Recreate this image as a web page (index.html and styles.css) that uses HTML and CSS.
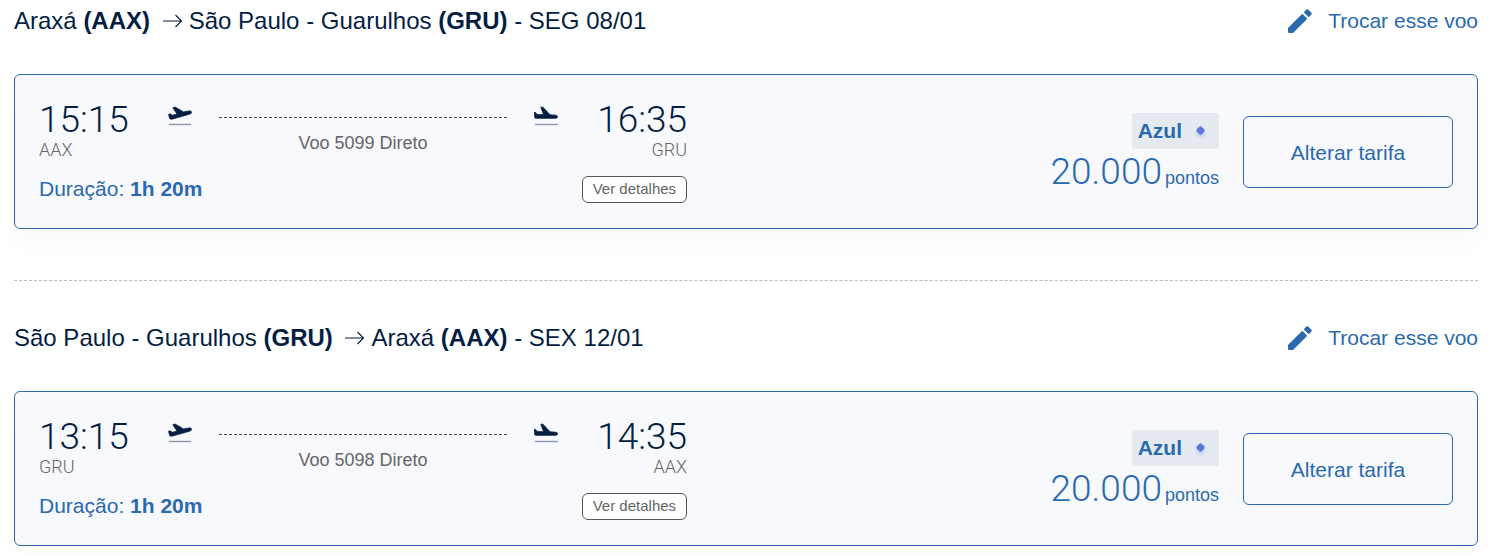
FILE: index.html
```html
<!DOCTYPE html>
<html lang="pt-BR">
<head>
  <meta charset="UTF-8">
  <meta name="viewport" content="width=device-width, initial-scale=1">
  <title>Seus voos</title>
  <link rel="stylesheet" href="styles.css">
</head>

<body>
  <!-- shared icons -->
  <svg class="sprite" aria-hidden="true">
    <symbol id="arrow" viewBox="0 0 20 16">
      <path d="M0 8H18.500M12.500 2L18.500 8L12.500 14" fill="none" stroke="currentColor" stroke-width="1.100"/>
    </symbol>
    <symbol id="pencil" viewBox="0 0 24 24">
      <path d="M0 19L14.300 4.700L19.300 9.700L5 24H1Q0 24 0 23Z" fill="currentColor"/>
      <path d="M15.700 3.300L18.400 .6Q19.300 -.2 20.200 .6L23.400 3.800Q24.200 4.700 23.400 5.600L20.700 8.300Z" fill="currentColor"/>
    </symbol>
    <symbol id="takeoff" viewBox="0 0 24 20">
      <path d="M.6 8.300L2 7.800L4.500 9.300L9 8L4.800 1.800L7 1L15.600 5.900L21.200 4.900Q23.200 4.700 23.500 6Q23.700 7.400 22 8.100L4.600 13Q2 13.600 1.500 12.300Z" fill="currentColor" stroke="currentColor" stroke-width=".8" stroke-linejoin="round"/>
      <path d="M1 18.500H23" stroke="#8b95a5" stroke-width="1.400"/>
    </symbol>
    <symbol id="landing" viewBox="0 0 24 20">
      <path d="M.5 6.300L1.700 6.500L3 8.600L9.600 8.700L6.800 1.200L9 1.200L16 8.800L21.500 9.200Q23.600 9.500 23.600 10.900Q23.400 12.300 21.500 12.300H2Q.5 12.300 .5 10.700Z" fill="currentColor" stroke="currentColor" stroke-width=".8" stroke-linejoin="round"/>
      <path d="M1 18.500H24" stroke="#8b95b5" stroke-width="1.400"/>
    </symbol>
  </svg>

  <main>
    <section class="flight">
      <header class="flight-header">
        <h2>Araxá <strong>(AAX)</strong> <svg class="arrow"><use href="#arrow"/></svg>São Paulo - Guarulhos <strong>(GRU)</strong> - SEG 08/01</h2>
        <a class="change" href="#"><svg class="pencil"><use href="#pencil"/></svg>Trocar esse voo</a>
      </header>
      <div class="card">
        <div class="journey">
          <div class="route">
            <div class="stop">
              <div class="time">15:15</div>
              <div class="code">AAX</div>
            </div>
            <svg class="plane"><use href="#takeoff"/></svg>
            <div class="path">Voo 5099 Direto</div>
            <svg class="plane"><use href="#landing"/></svg>
            <div class="stop arrival">
              <div class="time">16:35</div>
              <div class="code">GRU</div>
            </div>
          </div>
          <div class="info">
            <div class="duration">Duração: <strong>1h 20m</strong></div>
            <button class="details" type="button">Ver detalhes</button>
          </div>
        </div>
        <div class="fare">
          <div class="price">
            <div class="badge">Azul <span class="diamond"></span></div>
            <div class="points"><span class="amount">20.000</span><span class="unit">pontos</span></div>
          </div>
          <button class="fare-button" type="button">Alterar tarifa</button>
        </div>
      </div>
    </section>

    <section class="flight">
      <header class="flight-header">
        <h2>São Paulo - Guarulhos <strong>(GRU)</strong> <svg class="arrow"><use href="#arrow"/></svg>Araxá <strong>(AAX)</strong> - SEX 12/01</h2>
        <a class="change" href="#"><svg class="pencil"><use href="#pencil"/></svg>Trocar esse voo</a>
      </header>
      <div class="card">
        <div class="journey">
          <div class="route">
            <div class="stop">
              <div class="time">13:15</div>
              <div class="code">GRU</div>
            </div>
            <svg class="plane"><use href="#takeoff"/></svg>
            <div class="path">Voo 5098 Direto</div>
            <svg class="plane"><use href="#landing"/></svg>
            <div class="stop arrival">
              <div class="time">14:35</div>
              <div class="code">AAX</div>
            </div>
          </div>
          <div class="info">
            <div class="duration">Duração: <strong>1h 20m</strong></div>
            <button class="details" type="button">Ver detalhes</button>
          </div>
        </div>
        <div class="fare">
          <div class="price">
            <div class="badge">Azul <span class="diamond"></span></div>
            <div class="points"><span class="amount">20.000</span><span class="unit">pontos</span></div>
          </div>
          <button class="fare-button" type="button">Alterar tarifa</button>
        </div>
      </div>
    </section>
  </main>
</body>
</html>
```

FILE: styles.css
```css
*{
  box-sizing: border-box;
}

body{
  margin: 0;
  background-color: #ffffff;
  color: #041e43;
  font-family: "Liberation Sans", Arial, sans-serif;
}

button{
  font-family: inherit;
  cursor: pointer;
}

.sprite{
  display: none;
}

main{
  padding: 0 14px 8px;
}

.flight + .flight{
  margin-top: 51px;
  padding-top: 36px;
  border-top: 1px dashed #bbbbbb;
}

.flight-header{
  display: flex;
  justify-content: space-between;
  align-items: center;
  height: 42px;
  margin-bottom: 32px;
}

h2{
  margin: 0;
  font-size: 24px;
  font-weight: 400;
}

.arrow{
  width: 20px;
  height: 16px;
  margin: 0 6px;
}

.change{
  display: flex;
  align-items: center;
  gap: 16px;
  color: #2b69ae;
  font-size: 21px;
  text-decoration: none;
}

.pencil{
  width: 24px;
  height: 24px;
}

.card{
  display: grid;
  grid-template-columns: 11fr 13fr;
  align-items: center;
  padding: 24px;
  border: 1px solid #2f6aa8;
  border-radius: 6px;
  background-color: #f7f9fd;
  box-shadow: 0 16px 24px rgba(0, 0, 0, 0.02);
}

.route{
  display: flex;
}

.stop{
  width: 90px;
}

.arrival{
  text-align: right;
}

.time{
  font-family: Roboto, sans-serif;
  font-size: 37px;
  font-weight: 300;
  line-height: 41px;
}

.code{
  color: #666666;
  font-family: Roboto, sans-serif;
  font-size: 18px;
  font-weight: 300;
  line-height: 20px;
}

.plane{
  width: 24px;
  height: 20px;
  margin: 7px 39px 0;
}

.plane:first-of-type{
  margin-right: 27px;
}

.plane:last-of-type{
  margin-left: 27px;
}

.path{
  flex: 1;
  margin-top: 18px;
  padding-top: 15px;
  border-top: 1px dashed #444444;
  color: #666666;
  font-size: 18px;
  line-height: 20px;
  text-align: center;
}

.info{
  display: flex;
  justify-content: space-between;
  align-items: flex-start;
  margin-top: 16px;
}

.duration{
  color: #2b69ae;
  font-size: 21px;
  line-height: 26px;
}

.details{
  height: 27px;
  margin-bottom: 1px;
  padding: 0 10px 2px;
  border: 1px solid #555555;
  border-radius: 6px;
  background-color: #ffffff;
  color: #666666;
  font-size: 15px;
}

.fare{
  display: flex;
  justify-content: flex-end;
  align-items: center;
  gap: 24px;
  color: #2b69ae;
}

.price{
  display: flex;
  flex-direction: column;
  align-items: flex-end;
}

.badge{
  display: flex;
  align-items: center;
  gap: 15px;
  height: 36px;
  padding: 0 15px 0 6px;
  border-radius: 3px;
  background-color: #e5eaf1;
  font-size: 21px;
  font-weight: 700;
}

.diamond{
  width: 7px;
  height: 7px;
  border-radius: 2px;
  background-color: #5a7ada;
  box-shadow: 2px 2px 4px #b5c7f5;
  transform: rotate(45deg);
}

.points{
  display: flex;
  align-items: baseline;
  gap: 3px;
  padding-top: 4px;
}

.amount{
  font-family: Roboto, sans-serif;
  font-size: 37px;
  font-weight: 300;
  line-height: 38px;
}

.unit{
  font-size: 18px;
}

.fare-button{
  width: 210px;
  height: 72px;
  padding-top: 4px;
  border: 1px solid #2b69ae;
  border-radius: 6px;
  background-color: transparent;
  color: #2b69ae;
  font-size: 21px;
}
```
